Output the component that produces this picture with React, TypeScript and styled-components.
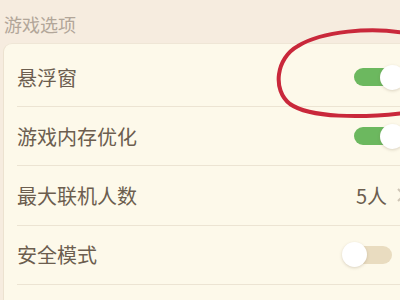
import React from "react";
import styled, { createGlobalStyle } from "styled-components";

const Global = createGlobalStyle`
  html, body { margin: 0; padding: 0; }
  body { width: 400px; height: 300px; overflow: hidden; font-family: "Noto Sans CJK SC", "Noto Sans", sans-serif; }
`;

const Page = styled.div`
  position: relative;
  width: 400px;
  height: 300px;
  overflow: hidden;
  background: #f6ecdf;
`;

const SectionTitle = styled.div`
  height: 43px;
  box-sizing: border-box;
  padding: 12px 0 0 4px;
  font-size: 18px;
  line-height: 24px;
  color: #b2a699;
`;

const Card = styled.div`
  margin-left: 3px;
  padding: 4px 0 0 13px;
  background: #fdf9ea;
  border-top-left-radius: 9px;
  border-left: 1px solid #ece2d0;
  border-top: 1px solid #efe6d6;
  height: 300px;
  box-sizing: border-box;
`;

const Row = styled.div`
  height: 58.2px;
  display: flex;
  align-items: center;
  justify-content: space-between;
  border-bottom: 1px solid #ece4d3;
`;

const Label = styled.span`
  font-size: 20px;
  color: #6c5e4f;
`;

const Track = styled.div<{ $on: boolean }>`
  position: relative;
  width: 38px;
  height: 18px;
  margin-right: 8px;
  border-radius: 9px;
  background: ${(p) => (p.$on ? "#6cb85f" : "#e9dcc0")};
`;

const Knob = styled.div<{ $on: boolean }>`
  position: absolute;
  top: 50%;
  left: ${(p) => (p.$on ? "38px" : "0px")};
  width: 25px;
  height: 25px;
  margin: -12.5px 0 0 -12.5px;
  border-radius: 50%;
  background: #ffffff;
  box-shadow: 0 1px 3px rgba(120, 100, 70, 0.25);
`;

const Value = styled.div`
  display: flex;
  align-items: center;
  gap: 9px;
  margin-right: -6px;
  font-size: 20px;
  color: #6c5e4f;
`;

const Annotation = styled.svg`
  position: absolute;
  left: 0;
  top: 0;
  pointer-events: none;
`;

const Toggle = ({ on }: { on: boolean }) => (
  <Track $on={on}>
    <Knob $on={on} />
  </Track>
);

export default function App() {
  return (
    <>
      <Global />
      <Page>
        <SectionTitle>游戏选项</SectionTitle>
        <Card>
          <Row>
            <Label>悬浮窗</Label>
            <Toggle on />
          </Row>
          <Row>
            <Label>游戏内存优化</Label>
            <Toggle on />
          </Row>
          <Row>
            <Label>最大联机人数</Label>
            <Value>
              <span>5人</span>
              <svg width="10" height="16" viewBox="0 0 10 16">
                <path d="M2 2 L8 8 L2 14" fill="none" stroke="#cfc6b6" strokeWidth="2" />
              </svg>
            </Value>
          </Row>
          <Row>
            <Label>安全模式</Label>
            <Toggle on={false} />
          </Row>
        </Card>
        <Annotation width="400" height="300" viewBox="0 0 400 300">
          <path
            d="M404 33 C 372 27, 322 31, 298 46 C 276 58, 272 90, 290 104 C 310 118, 362 118, 404 113"
            fill="none"
            stroke="#c9283b"
            strokeWidth="4"
            strokeLinecap="round"
          />
        </Annotation>
      </Page>
    </>
  );
}
